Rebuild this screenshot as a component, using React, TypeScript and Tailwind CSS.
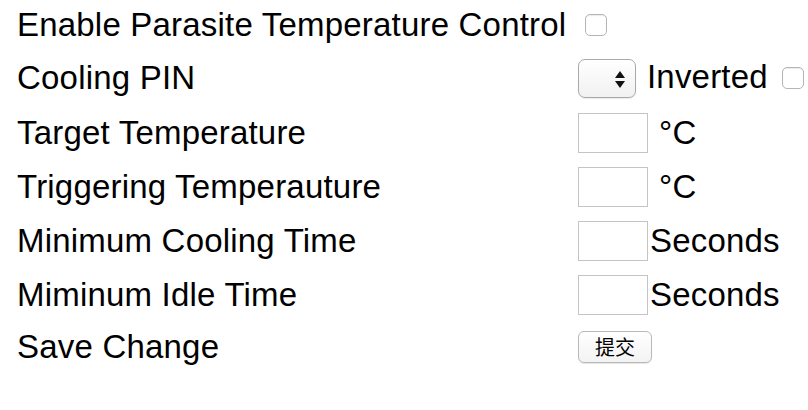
import React from "react";

const font = { fontFamily: '"Liberation Sans", Arial, sans-serif' };

const Checkbox = ({ className = "" }: { className?: string }) => (
  <input
    type="checkbox"
    className={`appearance-none w-[22px] h-[22px] rounded-[5px] border border-[#b4b4b4] bg-white shadow-[inset_0_1px_1px_rgba(0,0,0,0.08)] ${className}`}
  />
);

const TextBox = () => (
  <input
    type="text"
    className="w-[70px] h-[40px] border border-[#c4c4c4] bg-white outline-none"
  />
);

const SelectBox = () => (
  <div className="relative w-[58px] h-[39px] rounded-[7px] border border-[#a9a9a9] bg-gradient-to-b from-white to-[#f1f1f1] shadow-[0_1px_1px_rgba(0,0,0,0.08)]">
    <svg
      className="absolute right-[10px] top-[11px]"
      width="10"
      height="17"
      viewBox="0 0 10 17"
    >
      <path d="M5 0 L10 7 L0 7 Z" fill="#111" />
      <path d="M0 10 L10 10 L5 17 Z" fill="#111" />
    </svg>
  </div>
);

type Row = {
  label: string;
  height: string;
  control: React.ReactNode;
};

const rows: Row[] = [
  {
    label: "Enable Parasite Temperature Control",
    height: "h-[50px]",
    control: <Checkbox className="ml-[7px]" />,
  },
  {
    label: "Cooling PIN",
    height: "h-[56px]",
    control: (
      <div className="flex items-center">
        <SelectBox />
        <span className="ml-[11px] pb-[3px]">Inverted</span>
        <Checkbox className="ml-[14px]" />
      </div>
    ),
  },
  {
    label: "Target Temperature",
    height: "h-[54px]",
    control: (
      <div className="flex items-center">
        <TextBox />
        <span className="ml-[11px] pb-[2px]">°C</span>
      </div>
    ),
  },
  {
    label: "Triggering Temperauture",
    height: "h-[54px]",
    control: (
      <div className="flex items-center">
        <TextBox />
        <span className="ml-[11px] pb-[2px]">°C</span>
      </div>
    ),
  },
  {
    label: "Minimum Cooling Time",
    height: "h-[54px]",
    control: (
      <div className="flex items-center">
        <TextBox />
        <span className="ml-[2px] pb-[2px]">Seconds</span>
      </div>
    ),
  },
  {
    label: "Miminum Idle Time",
    height: "h-[54px]",
    control: (
      <div className="flex items-center">
        <TextBox />
        <span className="ml-[2px] pb-[2px]">Seconds</span>
      </div>
    ),
  },
  {
    label: "Save Change",
    height: "h-[50px]",
    control: (
      <button
        type="button"
        className="w-[74px] h-[32px] rounded-[6px] border border-[#b9b9b9] bg-gradient-to-b from-white to-[#f3f3f3] text-[20px] leading-none tracking-normal text-black shadow-[0_1px_1px_rgba(0,0,0,0.1)]"
        style={{ fontFamily: '"Noto Sans CJK SC", sans-serif' }}
      >
        提交
      </button>
    ),
  },
];

export default function App() {
  return (
    <div className="w-[808px] h-[410px] bg-white text-black overflow-hidden" style={font}>
      <div className="pl-[17px] text-[33px] leading-none tracking-[0.2px]">
        {rows.map((row) => (
          <div key={row.label} className={`flex items-center ${row.height}`}>
            <div className="w-[561px] shrink-0 whitespace-nowrap pb-[2px]">{row.label}</div>
            {row.control}
          </div>
        ))}
      </div>
    </div>
  );
}
